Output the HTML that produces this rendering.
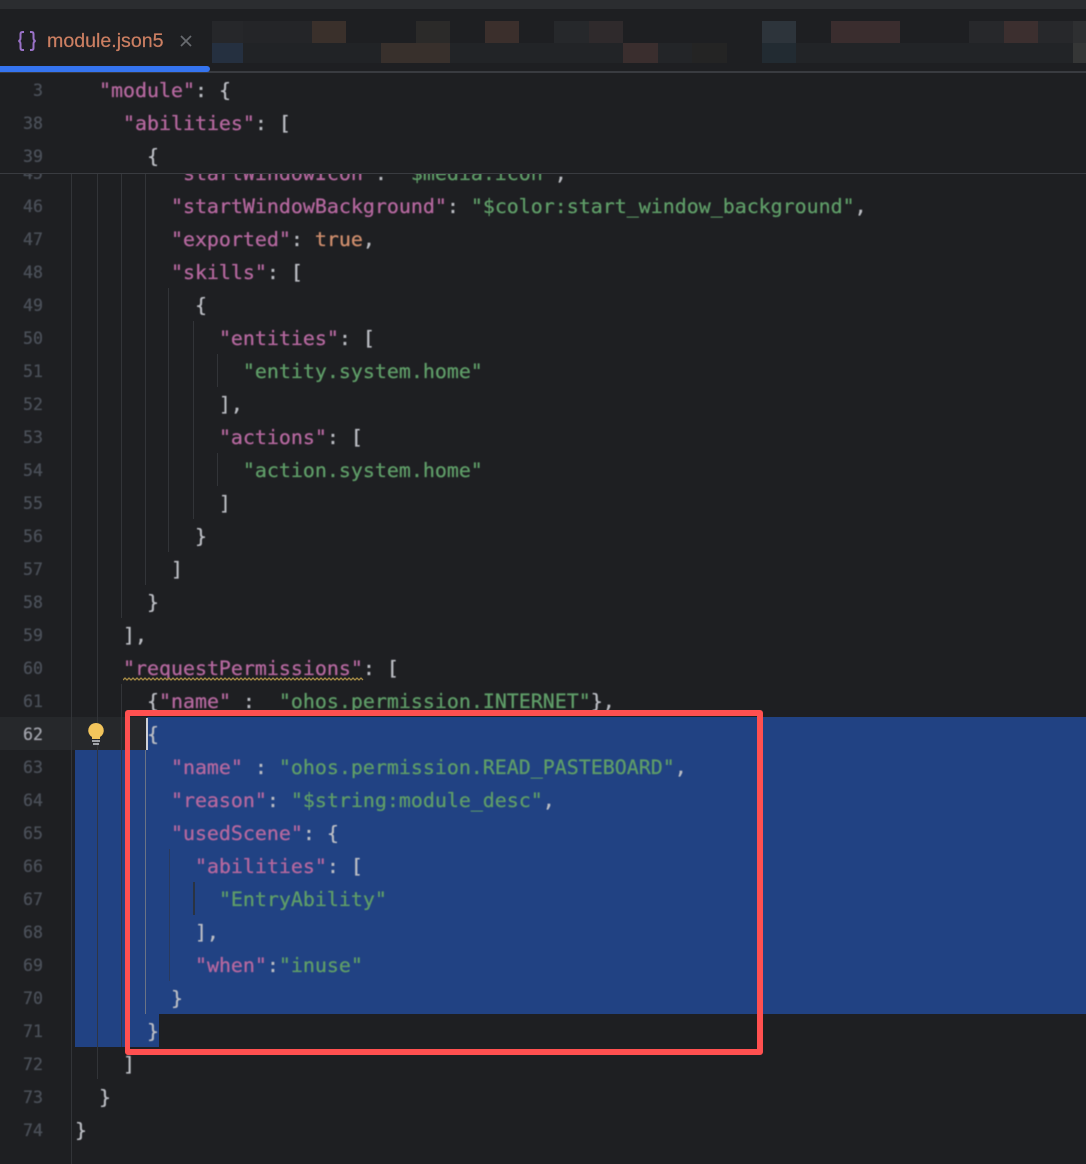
<!DOCTYPE html>
<html><head><meta charset="utf-8">
<style>
html,body{margin:0;padding:0;background:#1e1f22}
#r{position:relative;width:1086px;height:1164px;overflow:hidden;background:#1e1f22}
.a{position:absolute}
pre{position:absolute;margin:0;font-family:"DejaVu Sans Mono","Liberation Mono",monospace;font-size:19.93px;line-height:33px;color:#bcbec4;filter:blur(.4px);-webkit-text-stroke:.3px}
.c{left:75px}
.n{left:0;width:43px;text-align:right;font-size:16.6px;color:#4b5059}
i{font-style:normal;color:#b5689f}
b{font-weight:normal;color:#5f9d68}
u{text-decoration:none;color:#cf8e6d}
.g{position:absolute;width:1px;background:#323438}
.d{background:#2f3644}
</style></head><body><div id="r">
<div class="a" style="left:0;top:0;width:1086px;height:9px;background:#2b2d30"></div>

<div class="a" style="left:212px;top:21px;width:31px;height:22px;background:#26272a"></div>
<div class="a" style="left:243px;top:21px;width:69px;height:22px;background:#242528"></div>
<div class="a" style="left:312px;top:21px;width:34px;height:22px;background:#3a302b"></div>
<div class="a" style="left:416px;top:21px;width:34px;height:22px;background:#2b2a29"></div>
<div class="a" style="left:485px;top:21px;width:34px;height:22px;background:#3b2f2c"></div>
<div class="a" style="left:554px;top:21px;width:35px;height:22px;background:#26282b"></div>
<div class="a" style="left:589px;top:21px;width:34px;height:22px;background:#2f2a2c"></div>
<div class="a" style="left:762px;top:21px;width:34px;height:22px;background:#2d343b"></div>
<div class="a" style="left:831px;top:21px;width:69px;height:22px;background:#3a2d2e"></div>
<div class="a" style="left:969px;top:21px;width:35px;height:22px;background:#27282b"></div>
<div class="a" style="left:1004px;top:21px;width:34px;height:22px;background:#3c2f2f"></div>
<div class="a" style="left:1038px;top:21px;width:35px;height:22px;background:#27282b"></div>
<div class="a" style="left:1073px;top:21px;width:13px;height:22px;background:#2e2f31"></div>
<div class="a" style="left:212px;top:43px;width:31px;height:20px;background:#253040"></div>
<div class="a" style="left:243px;top:43px;width:138px;height:20px;background:#212326"></div>
<div class="a" style="left:381px;top:43px;width:69px;height:20px;background:#38302c"></div>
<div class="a" style="left:450px;top:43px;width:173px;height:20px;background:#222427"></div>
<div class="a" style="left:623px;top:43px;width:35px;height:20px;background:#3a2e2e"></div>
<div class="a" style="left:658px;top:43px;width:34px;height:20px;background:#232528"></div>
<div class="a" style="left:692px;top:43px;width:35px;height:20px;background:#242424"></div>
<div class="a" style="left:762px;top:43px;width:34px;height:20px;background:#222b32"></div>
<div class="a" style="left:796px;top:43px;width:277px;height:20px;background:#222427"></div>
<div class="a" style="left:1073px;top:43px;width:13px;height:20px;background:#353636"></div>

<svg class="a" style="left:17px;top:30px" width="20" height="22" viewBox="0 0 20 22" fill="none" stroke="#9a72c8" stroke-width="2"><path d="M7 2H5.5Q3.5 2 3.5 4V8Q3.5 10.5 1.5 11Q3.5 11.5 3.5 14V18Q3.5 20 5.5 20H7M13 2H14.5Q16.5 2 16.5 4V8Q16.5 10.5 18.5 11Q16.5 11.5 16.5 14V18Q16.5 20 14.5 20H13"/></svg>
<div class="a" style="left:47px;top:29px;font:19.6px/24px 'Liberation Sans',sans-serif;color:#cc7f62;white-space:nowrap;filter:blur(.3px);-webkit-text-stroke:.2px">module.json5</div>
<svg class="a" style="left:179px;top:34px" width="14" height="14" fill="none" stroke="#686b70" stroke-width="1.7"><path d="M2 2L12 12M12 2L2 12"/></svg>

<div class="a" style="left:0;top:71px;width:1086px;height:3px;background:#393b40"></div>
<div class="a" style="left:0;top:66px;width:210px;height:6px;background:#3574f0;border-radius:0 3px 3px 0"></div>

<div class="a" style="left:0;top:717px;width:147px;height:33px;background:#26282b"></div>
<div class="a" style="left:147px;top:717px;width:939px;height:33px;background:#214283"></div>
<div class="a" style="left:75px;top:750px;width:1011px;height:264px;background:#214283"></div>
<div class="a" style="left:75px;top:1014px;width:84px;height:33px;background:#214283"></div>

<div class="g" style="left:71px;top:173px;height:991px"></div>
<div class="g" style="left:97px;top:173px;height:906px"></div>
<div class="g d" style="left:97px;top:750px;height:297px"></div>
<div class="g" style="left:121px;top:173px;height:445px"></div>
<div class="g" style="left:121px;top:684px;height:363px"></div>
<div class="g d" style="left:121px;top:750px;height:297px"></div>
<div class="g" style="left:145px;top:173px;height:412px"></div>
<div class="g" style="left:145px;top:750px;height:264px;background:#6a7385"></div>
<div class="g" style="left:168px;top:288px;height:264px"></div>
<div class="g" style="left:193px;top:321px;height:198px"></div>
<div class="g" style="left:217px;top:354px;height:33px"></div>
<div class="g" style="left:217px;top:453px;height:33px"></div>
<div class="g" style="left:169px;top:849px;height:132px;background:#2a3a5c"></div>
<div class="g" style="left:193px;top:882px;height:33px;width:2px;background:#2a3342"></div>

<pre class="n" style="top:156.5px">45
46
47
48
49
50
51
52
53
54
55
56
57
58
59
60
61
<span style="color:#a1a3ab">62</span>
63
64
65
66
67
68
69
70
71
72
73
74</pre>
<pre class="c" style="top:156.5px">        <i>"startWindowIcon"</i>: <b>"$media:icon"</b>,
        <i>"startWindowBackground"</i>: <b>"$color:start_window_background"</b>,
        <i>"exported"</i>: <u>true</u>,
        <i>"skills"</i>: [
          {
            <i>"entities"</i>: [
              <b>"entity.system.home"</b>
            ],
            <i>"actions"</i>: [
              <b>"action.system.home"</b>
            ]
          }
        ]
      }
    ],
    <i>"requestPermissions"</i>: [
      {<i>"name"</i> :  <b>"ohos.permission.INTERNET"</b>},
      {
        <i>"name"</i> : <b>"ohos.permission.READ_PASTEBOARD"</b>,
        <i>"reason"</i>: <b>"$string:module_desc"</b>,
        <i>"usedScene"</i>: {
          <i>"abilities"</i>: [
            <b>"EntryAbility"</b>
          ],
          <i>"when"</i>:<b>"inuse"</b>
        }
      }
    ]
  }
}</pre>

<svg class="a" style="left:123px;top:676px" width="241" height="6"><path d="M0 4 L2 2 L4 4 L6 2 L8 4 L10 2 L12 4 L14 2 L16 4 L18 2 L20 4 L22 2 L24 4 L26 2 L28 4 L30 2 L32 4 L34 2 L36 4 L38 2 L40 4 L42 2 L44 4 L46 2 L48 4 L50 2 L52 4 L54 2 L56 4 L58 2 L60 4 L62 2 L64 4 L66 2 L68 4 L70 2 L72 4 L74 2 L76 4 L78 2 L80 4 L82 2 L84 4 L86 2 L88 4 L90 2 L92 4 L94 2 L96 4 L98 2 L100 4 L102 2 L104 4 L106 2 L108 4 L110 2 L112 4 L114 2 L116 4 L118 2 L120 4 L122 2 L124 4 L126 2 L128 4 L130 2 L132 4 L134 2 L136 4 L138 2 L140 4 L142 2 L144 4 L146 2 L148 4 L150 2 L152 4 L154 2 L156 4 L158 2 L160 4 L162 2 L164 4 L166 2 L168 4 L170 2 L172 4 L174 2 L176 4 L178 2 L180 4 L182 2 L184 4 L186 2 L188 4 L190 2 L192 4 L194 2 L196 4 L198 2 L200 4 L202 2 L204 4 L206 2 L208 4 L210 2 L212 4 L214 2 L216 4 L218 2 L220 4 L222 2 L224 4 L226 2 L228 4 L230 2 L232 4 L234 2 L236 4 L238 2 L240 4" fill="none" stroke="#a58a45" stroke-width="1.3"/></svg>

<div class="a" style="left:146px;top:718px;width:2px;height:32px;background:#ced0d6"></div>

<svg class="a" style="left:86px;top:721px" width="20" height="26"><path d="M10 2A7.5 7.5 0 0 1 14 16V18H6V16A7.5 7.5 0 0 1 10 2Z" fill="#f2c55c"/><path d="M6 20H14M7 23H13" stroke="#c9ccd2" stroke-width="1.6"/></svg>

<div class="a" style="left:0;top:73px;width:1086px;height:100px;background:#1e1f22"></div>
<div class="a" style="left:0;top:173px;width:1086px;height:1px;background:#393b40"></div>
<pre class="n" style="top:73.5px"> 3
38
39</pre>
<pre class="c" style="top:73.5px">  <i>"module"</i>: {
    <i>"abilities"</i>: [
      {</pre>

<div class="a" style="left:125px;top:710px;width:627px;height:333px;border:5px solid #ff5050;border-top-width:6px;border-right-width:6px;border-bottom-width:6px;border-radius:3px;box-sizing:content-box"></div>
</div></body></html>
